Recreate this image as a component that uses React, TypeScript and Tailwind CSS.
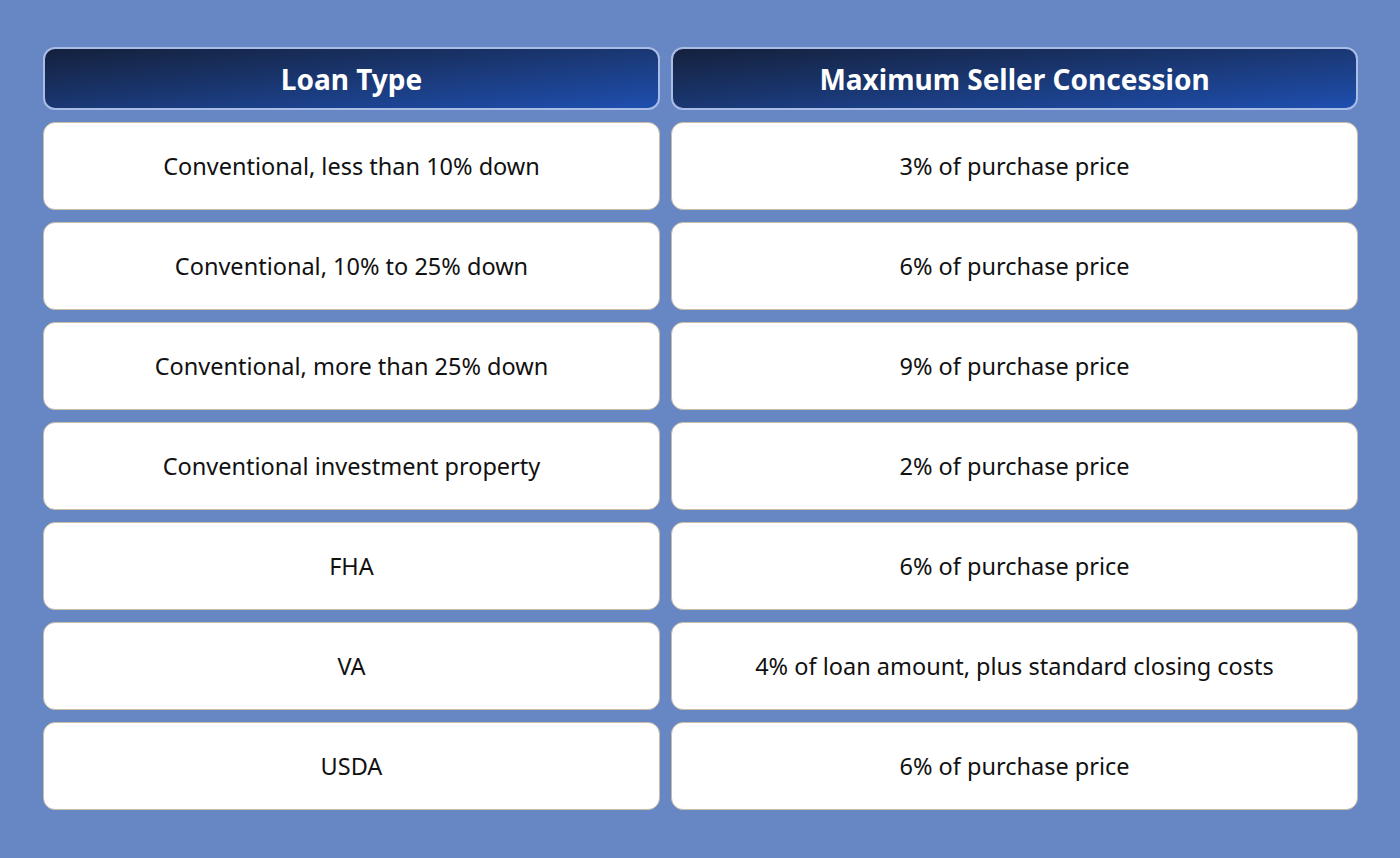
import React from "react";

const rows: [string, string][] = [
  ["Conventional, less than 10% down", "3% of purchase price"],
  ["Conventional, 10% to 25% down", "6% of purchase price"],
  ["Conventional, more than 25% down", "9% of purchase price"],
  ["Conventional investment property", "2% of purchase price"],
  ["FHA", "6% of purchase price"],
  ["VA", "4% of loan amount, plus standard closing costs"],
  ["USDA", "6% of purchase price"],
];

export default function App() {
  return (
    <div
      className="w-[1400px] h-[858px] bg-[#6687c3] pt-[47px] pl-[43px]"
      style={{ fontFamily: '"Noto Sans", "Open Sans", sans-serif' }}
    >
      <div className="grid grid-cols-[617px_687px] gap-x-[11px] gap-y-[12px]">
        {["Loan Type", "Maximum Seller Concession"].map((h) => (
          <div
            key={h}
            className="h-[63px] rounded-[12px] border-2 border-[#a9bde6] bg-gradient-to-br from-[#14213d] to-[#1e4fb0] flex items-center justify-center text-white font-bold text-[28px]"
          >
            {h}
          </div>
        ))}
        {rows.map(([a, b]) => (
          <React.Fragment key={a}>
            <div className="h-[88px] pt-[2px] rounded-[12px] border border-[#c9bda3] bg-white flex items-center justify-center text-[23.5px] text-[#111]">
              {a}
            </div>
            <div className="h-[88px] pt-[2px] rounded-[12px] border border-[#c9bda3] bg-white flex items-center justify-center text-[23.5px] text-[#111]">
              {b}
            </div>
          </React.Fragment>
        ))}
      </div>
    </div>
  );
}
